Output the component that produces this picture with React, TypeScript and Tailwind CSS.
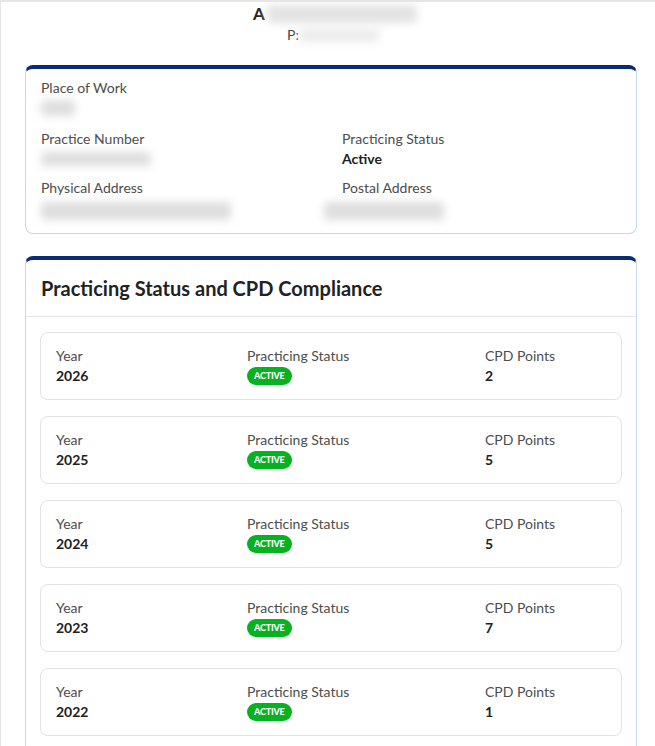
import React from 'react';

interface ComplianceYear {
  year: number;
  status: string;
  cpdPoints: number;
}

const years: ComplianceYear[] = [
  { year: 2026, status: 'Active', cpdPoints: 2 },
  { year: 2025, status: 'Active', cpdPoints: 5 },
  { year: 2024, status: 'Active', cpdPoints: 5 },
  { year: 2023, status: 'Active', cpdPoints: 7 },
  { year: 2022, status: 'Active', cpdPoints: 1 },
];

function Redacted({ className }: { className: string }) {
  return <span className={`block rounded-sm bg-[#dedede] blur-[4px] ${className}`} />;
}

function Field({ label, className = 'mb-[11px]', children }: { label: string; className?: string; children: React.ReactNode }) {
  return (
    <div className={className}>
      <div className="text-[14px] leading-5 text-[#4d4d4d]">{label}</div>
      <div className="flex h-5 items-center text-[14px] leading-5 font-bold text-[#222]">{children}</div>
    </div>
  );
}

export default function App() {
  return (
    <div
      className="min-h-[746px] border-t-2 border-l border-[#e6e6e6] bg-white pb-3"
      style={{ fontFamily: 'Lato, "Open Sans", Arial, sans-serif' }}
    >
      {/* Header */}
      <div className="pt-[1px] text-center">
        <div className="flex items-center justify-center text-[17px] leading-[22px] font-bold text-[#222]">
          <span className="ml-[14px]">A</span>
          <Redacted className="ml-[2px] h-[18px] w-[150px] bg-[#e3e3e3]" />
        </div>
        <div className="flex items-center justify-center text-[14px] leading-5 text-[#444]">
          <span className="ml-[10px]">P:</span>
          <Redacted className="h-[14px] w-[80px] bg-[#ececec]" />
        </div>
      </div>

      <div className="mt-[20px] ml-[24px] w-[612px]">
        {/* Details card */}
        <div className="rounded-lg border border-t-4 border-[#c5d9f3] border-t-[#0b2c72] px-[15px] pt-[9px] pb-[15px]">
          <div className="grid grid-cols-[301px_1fr]">
            <div>
              <Field label="Place of Work">
                <Redacted className="h-[16px] w-[34px]" />
              </Field>
              <Field label="Practice Number" className="mb-[9px]">
                <Redacted className="h-[14px] w-[110px]" />
              </Field>
              <Field label="Physical Address" className="">
                <Redacted className="mt-[6px] h-[18px] w-[190px]" />
              </Field>
            </div>
            <div className="pt-[51px]">
              <Field label="Practicing Status" className="mb-[9px]">Active</Field>
              <Field label="Postal Address" className="">
                <Redacted className="-ml-[18px] mt-[6px] h-[18px] w-[120px]" />
              </Field>
            </div>
          </div>
        </div>

        {/* Compliance card */}
        <div className="mt-[22px] rounded-lg border border-t-4 border-[#c5d9f3] border-t-[#0b2c72]">
          <div className="border-b border-[#e6e6e6] px-[15px] py-4">
            <h2 className="text-[20px] leading-6 font-bold text-[#222]">
              Practicing Status and CPD Compliance
            </h2>
          </div>
          <div className="flex flex-col gap-4 px-[14px] pt-[15px] pb-4">
            {years.map((item) => (
              <div
                key={item.year}
                className="flex rounded-lg border border-[#e3e3e3] px-[15px] py-[13px] text-[14px] leading-5"
              >
                <div className="w-[191px]">
                  <div className="text-[#4d4d4d]">Year</div>
                  <div className="font-bold text-[#222]">{item.year}</div>
                </div>
                <div className="w-[238px]">
                  <div className="text-[#4d4d4d]">Practicing Status</div>
                  <div className="flex h-5 items-center">
                    <span className="inline-flex h-[18px] items-center rounded-full bg-[#05b21f] px-[7px] text-[9px] font-black tracking-[-0.2px] text-white uppercase">
                      {item.status}
                    </span>
                  </div>
                </div>
                <div className="flex-1">
                  <div className="text-[#4d4d4d]">CPD Points</div>
                  <div className="font-bold text-[#222]">{item.cpdPoints}</div>
                </div>
              </div>
            ))}
          </div>
        </div>
      </div>
    </div>
  );
}
